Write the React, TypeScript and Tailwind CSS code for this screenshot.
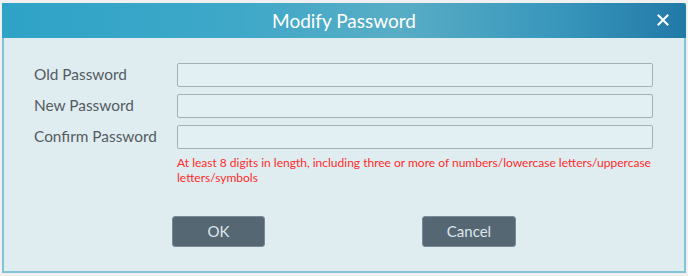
import React from 'react';

const fields = ['Old Password', 'New Password', 'Confirm Password'];

export default function App() {
  return (
    <div
      className="w-[688px] h-[276px] bg-[#f0f0f0] pt-[3px] pl-[2px] overflow-hidden"
      style={{ fontFamily: 'Lato, "Open Sans", sans-serif' }}
    >
      <div className="w-[684px] h-[270px] flex flex-col bg-[#dfedf1] border-x-2 border-b-2 border-[#85c2d8]">
        <div className="h-[35px] -mx-[2px] flex items-center justify-center relative rounded-tr-[3px] bg-[linear-gradient(to_right,#2ea3c7,#3fa8c8_35%,#58adc5_58%,#3a98bd_80%,#2179a7)]">
          <span className="text-white text-[19px] leading-none">Modify Password</span>
          <svg className="absolute right-[17px] top-[11px]" width="12" height="12" viewBox="0 0 12 12">
            <path d="M1.5 1.5 L10.5 10.5 M10.5 1.5 L1.5 10.5" stroke="#fff" strokeWidth="2" strokeLinecap="square" />
          </svg>
        </div>
        <div className="flex flex-col pt-[25px] pl-[30px]">
          <div className="flex flex-col gap-[7px]">
            {fields.map((f) => (
              <div key={f} className="flex items-center h-[24px]">
                <div className="w-[143px] text-[15.4px] text-[#555b60]">{f}</div>
                <input
                  type="password"
                  className="w-[476px] h-[24px] bg-[#e2eff3] border border-[#a7afb3] rounded-[2px] outline-none"
                />
              </div>
            ))}
          </div>
          <div className="ml-[143px] w-[480px] mt-[6px] text-[12px] leading-[15px] text-[#ff2b2b]">
            At least 8 digits in length, including three or more of numbers/lowercase letters/uppercase letters/symbols
          </div>
          <div className="flex justify-center gap-[157px] mt-[31px] -ml-[30px]">
            <button className="w-[93px] h-[31px] rounded-[3px] bg-[#566774] border border-[#7c8a95] text-[15px] text-[#dde6ec]">
              OK
            </button>
            <button className="w-[94px] h-[31px] rounded-[3px] bg-[#566774] border border-[#7c8a95] text-[15px] text-[#dde6ec]">
              Cancel
            </button>
          </div>
        </div>
      </div>
    </div>
  );
}
